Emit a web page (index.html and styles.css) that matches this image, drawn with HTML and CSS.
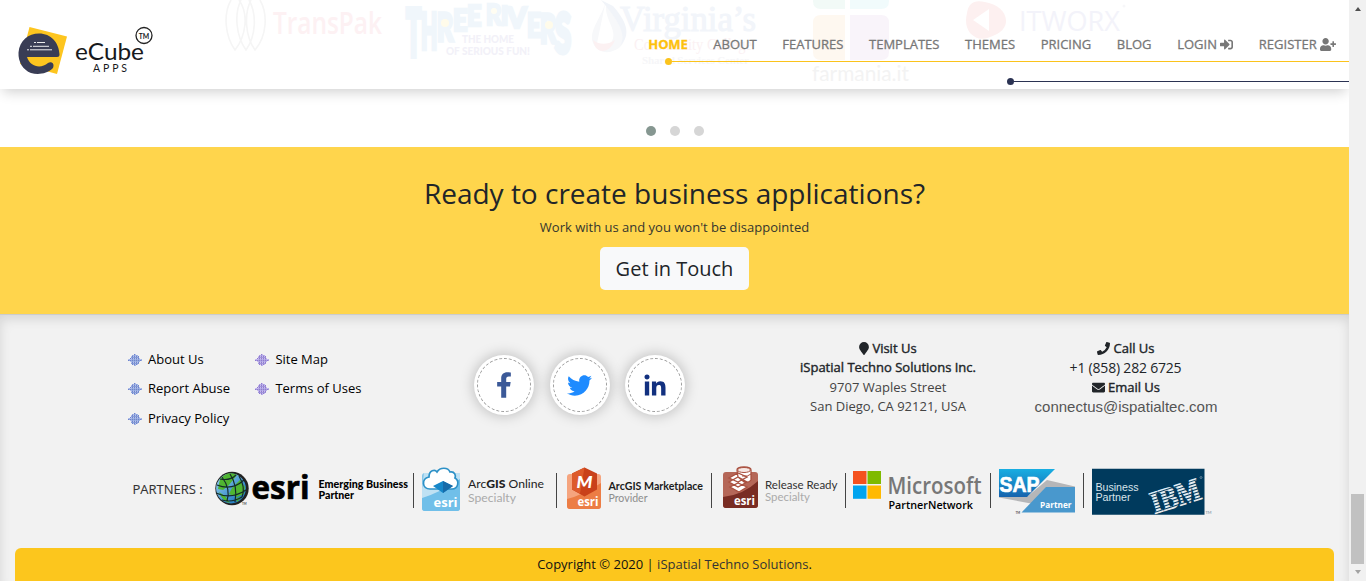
FILE: index.html
```
<!DOCTYPE html>
<html lang="en">
<head>
<meta charset="utf-8">
<title>eCube Apps</title>
<link rel="stylesheet" href="styles.css">
</head>
<body>
<svg width="0" height="0" class="defs">
  <defs>
    <pattern id="mesh" width="2" height="2" patternUnits="userSpaceOnUse"><rect width="2" height="2" fill="#b9c0ea"/><rect width="1" height="1" fill="#6b7fd4"/><rect x="1" y="1" width="1" height="1" fill="#9db8e8"/></pattern>
    <symbol id="bullet" viewBox="0 0 14 12"><path d="M6 0h2v1h2v1h1v2h1v1h2v2h-2v1h-1v2h-1v1H8v1H6v-1H4v-1H3V8H2V7H0V5h2V4h1V2h1V1h2z" fill="url(#mesh)"/><path d="M4.500 1v10M6.500 0v12M8.500 1v10M10.500 2v8M3 3.500h8M0 6.500h14M3 9.500h8" stroke="#6f8bcb" stroke-width=".5"/></symbol>
    <linearGradient id="globeSea" x1="0" y1="0" x2="1" y2="1"><stop offset="0" stop-color="#9bd4f2"/><stop offset="1" stop-color="#0867b5"/></linearGradient>
    <linearGradient id="sapBlue" x1="0" y1="0" x2="0" y2="1"><stop offset="0" stop-color="#18aee2"/><stop offset="1" stop-color="#1663ad"/></linearGradient>
  </defs>
</svg>
<div class="window">
  <div class="page">
    <header class="header">
      <svg class="clients" width="1349" height="89" viewBox="0 0 1349 89">
        <g fill="none" stroke="#f5f5f5" stroke-width="1.600"><path d="M231 0c-8 14-6 36 4 50 11-14 14-36 4-50M241 0c-7 14-5 36 5 50 10-14 11-36 3-50M251 0c-7 14-6 36 4 50 12-14 13-36 5-50"/></g>
        <text class="ghost-sans" x="273" y="34" font-size="30" font-weight="600" fill="#fdf1f3" textLength="109" lengthAdjust="spacingAndGlyphs">TransPak</text>
        <g class="arch" fill="#f0f6fb" stroke="#f0f6fb" stroke-width=".9" font-size="10" font-weight="900">
          <text transform="translate(406 56) scale(2.500 6.500)">T</text><text transform="translate(421 49) scale(2.100 4.900)">H</text><text transform="translate(437 41) scale(2.500 3.800)">R</text><text transform="translate(453 31) scale(2.500 3)">E</text><text transform="translate(467 26) scale(2.500 2.800)">E</text>
          <text transform="translate(486 25) scale(2.400 2.900)">R</text><text transform="translate(501 25) scale(2.400 2.700)">I</text><text transform="translate(507 28) scale(2.800 2.800)">V</text><text transform="translate(527 37) scale(2.400 3.300)">E</text><text transform="translate(540 43) scale(2.500 4)">R</text><text transform="translate(555 53) scale(2.900 5.600)">S</text>
        </g>
        <g fill="#f2f1f8" font-family="Lato, sans-serif" font-weight="900"><text x="462" y="43" font-size="11" textLength="52" lengthAdjust="spacingAndGlyphs">THE HOME</text><text x="446" y="55" font-size="11" textLength="84" lengthAdjust="spacingAndGlyphs">OF SERIOUS FUN!</text></g>
        <circle cx="445" cy="23" r="4" fill="#fffbea"/><circle cx="494" cy="11" r="3" fill="#fffdf2"/><circle cx="549" cy="25" r="4" fill="#fffbea"/>
        <path d="M606 0c-3 16-18 30-13 43 4 10 16 12 26 5 11-9 4-23-13-42-1 15 13 25 5 37-4 6-11 8-15 5" fill="#f7f8fa"/><path d="M601 0c15 18 27 34 19 46 12-12 6-25-7-40z" fill="#f1f4f9"/><path d="M593 40c5 4 13 6 22 0-4 12-19 17-22 0" fill="#fcf1f2"/>
        <g font-family="'Liberation Serif', serif" fill="#f2f5fa"><text x="620" y="31" font-size="36" font-weight="400" stroke="#f2f5fa" textLength="136" lengthAdjust="spacingAndGlyphs">Virginia’s</text><text x="634" y="50" font-size="17" fill="#fbf1f3" textLength="118" lengthAdjust="spacingAndGlyphs">Community College</text><text x="642" y="64" font-size="11" font-weight="700" fill="#f6f6f8" textLength="107">Shared Services Center</text></g>
        <path d="M813 0h32v9h-24q-8 0-8-8z" fill="#f2faf7"/><path d="M850 0h39v1q0 8-8 8h-31z" fill="#f1fbfc"/><path d="M821 15h24v45h-24q-8 0-8-8V23q0-8 8-8" fill="#fef8f0"/><path d="M850 15h31q8 0 8 8v29q0 8-8 8h-31z" fill="#f9f4fa"/>
        <text x="812" y="81" font-family="Lato, sans-serif" font-size="21" fill="#f3f3f3" textLength="97" lengthAdjust="spacingAndGlyphs">farmania.it</text>
        <path d="M967 13q2-15 18-11c22 4 28 23 12 32-12 6-19 7-27-1q-6-8-3-20m6 7 16 11V9z" fill="#fdf0f0" fill-rule="evenodd"/><text class="ghost-sans" x="1019" y="31" font-size="28" fill="#f3f3fa" textLength="101" lengthAdjust="spacingAndGlyphs">ITWORX</text><circle cx="1124" cy="6" r="1.500" fill="#f7f7f9"/>
      </svg>
      <a class="brand" href="#">
        <svg width="140" height="56" viewBox="15 24 140 56">
          <path d="M29.500 27 67 36.500 57 74 20 64z" fill="#fdc51f"/>
          <path d="M59.500 54.500q0 2.500-2.500 2.500H27c3 10 14 12 21 6 3-2 7 0 5 5-6 6-15 7-22 5-8-3-13-11-12.500-20.500 1-12 10-19 20.500-19 12 0 20 9 20.500 21" fill="#393d55"/>
          <path d="M34 42.500h2M37 42.500h8M30 46.300h2M33 46.300h16M27 49.800h2M30 49.800h22" stroke="#fff" stroke-width=".9"/>
          <circle cx="144" cy="35.500" r="8" fill="none" stroke="#222" stroke-width="1.300"/>
          <g font-family="Lato, sans-serif" fill="#17191c"><text x="75" y="60" font-size="23" textLength="69" lengthAdjust="spacingAndGlyphs">eCube</text><text x="138.700" y="38.500" font-size="7.500" font-weight="700" textLength="10.500" lengthAdjust="spacingAndGlyphs">TM</text><text x="93" y="72" font-size="10.500" textLength="34" lengthAdjust="spacing">APPS</text></g>
        </svg>
      </a>
      <div class="menu">
        <nav class="nav">
          <a class="active" href="#">HOME</a><a href="#">ABOUT</a><a href="#">FEATURES</a><a href="#">TEMPLATES</a><a href="#">THEMES</a><a href="#">PRICING</a><a href="#">BLOG</a>
          <a href="#">LOGIN <svg width="13" height="13" viewBox="0 0 512 512"><path fill="currentColor" d="M416 448h-84c-6.600 0-12-5.400-12-12v-40c0-6.600 5.400-12 12-12h84c17.700 0 32-14.300 32-32V160c0-17.700-14.300-32-32-32h-84c-6.600 0-12-5.400-12-12V76c0-6.600 5.400-12 12-12h84c53 0 96 43 96 96v192c0 53-43 96-96 96zm-47-209L201 71c-15-15-41-4.500-41 17v96H24c-13.300 0-24 10.700-24 24v96c0 13.300 10.700 24 24 24h136v96c0 21.500 26 32 41 17l168-168c9.300-9.400 9.300-24.600 0-34z"/></svg></a>
          <a href="#">REGISTER <svg width="16" height="13" viewBox="0 0 640 512"><path fill="currentColor" d="M624 208h-64v-64c0-8.800-7.200-16-16-16h-32c-8.800 0-16 7.200-16 16v64h-64c-8.800 0-16 7.200-16 16v32c0 8.800 7.200 16 16 16h64v64c0 8.800 7.200 16 16 16h32c8.800 0 16-7.200 16-16v-64h64c8.800 0 16-7.200 16-16v-32c0-8.800-7.200-16-16-16zm-400 48c70.700 0 128-57.300 128-128S294.700 0 224 0 96 57.300 96 128s57.300 128 128 128zm89.600 32h-16.700c-22.200 10.200-46.900 16-72.900 16s-50.600-5.800-72.900-16h-16.700C60.200 288 0 348.200 0 422.400V464c0 26.500 21.500 48 48 48h352c26.500 0 48-21.500 48-48v-41.600c0-74.200-60.200-134.400-134.400-134.400z"/></svg></a>
        </nav>
        <div class="rule gold"></div>
        <div class="rule navy"></div>
      </div>
    </header>
    <section class="carousel"><span class="dot on"></span><span class="dot"></span><span class="dot"></span></section>
    <section class="cta">
      <h2>Ready to create business applications?</h2>
      <p>Work with us and you won't be disappointed</p>
      <a class="button" href="#">Get in Touch</a>
    </section>
    <footer class="footer">
      <div class="info">
        <ul class="links">
          <li><svg width="14" height="12"><use href="#bullet"/></svg>About Us</li><li class="alt"><svg width="14" height="12"><use href="#bullet"/></svg>Site Map</li>
          <li><svg width="14" height="12"><use href="#bullet"/></svg>Report Abuse</li><li class="alt"><svg width="14" height="12"><use href="#bullet"/></svg>Terms of Uses</li>
          <li><svg width="14" height="12"><use href="#bullet"/></svg>Privacy Policy</li>
        </ul>
        <div class="social">
          <a href="#"><span><svg width="16" height="26" viewBox="0 0 320 512"><path fill="#3b5998" d="m279 288 14-93h-89v-60c0-25 12-50 52-50h41V7s-37-7-72-7c-73 0-121 44-121 125v70H23v93h81v224h100V288z"/></svg></span></a>
          <a href="#"><span><svg width="25" height="25" viewBox="0 0 512 512"><path fill="#1e8bff" d="M459.400 151.700c.3 4.500.3 9.100.3 13.600 0 138.700-105.600 298.600-298.600 298.600-59.500 0-114.700-17.200-161.100-47.100 8.400 1 16.600 1.300 25.300 1.300 49.100 0 94.200-16.600 130.300-44.800-46.100-1-84.800-31.200-98.100-72.800 6.500 1 13 1.600 19.800 1.600 9.400 0 18.800-1.300 27.600-3.600-48.100-9.700-84.100-52-84.100-103v-1.300c14 7.800 30.200 12.700 47.400 13.300-28.300-18.800-46.800-51-46.800-87.400 0-19.500 5.200-37.400 14.300-53 51.700 63.700 129.300 105.300 216.400 109.800-1.600-7.800-2.600-15.900-2.600-24 0-57.800 46.800-104.900 104.900-104.900 30.200 0 57.500 12.700 76.700 33.100 23.700-4.500 46.500-13.300 66.600-25.300-7.800 24.400-24.400 44.800-46.100 57.800 21.100-2.300 41.600-8.100 60.400-16.200-14.300 20.800-32.200 39.300-52.600 54.300z"/></svg></span></a>
          <a href="#"><span><svg width="24" height="24" viewBox="0 0 448 512"><path fill="#12307f" d="M100.300 480H7.400V180.900h92.900zM53.800 140.100C24.100 140.100 0 115.500 0 85.800a53.800 53.800 0 0 1 107.600 0c0 29.700-24.100 54.300-53.800 54.300zM448 480h-92.700V334.400c0-34.700-.7-79.200-48.300-79.200-48.300 0-55.700 37.700-55.700 76.700V480h-92.800V180.900h89.100v40.800h1.300c12.400-23.500 42.700-48.300 87.900-48.300 94 0 111.300 61.900 111.300 142.300V480z"/></svg></span></a>
        </div>
        <div class="contact visit">
          <div class="strong"><svg width="10" height="13" viewBox="0 0 384 512"><path fill="currentColor" d="M172 502C27 291 0 270 0 192a192 192 0 0 1 384 0c0 78-27 99-172 310-10 13-30 13-40 0"/></svg> Visit Us</div>
          <div class="strong">iSpatial Techno Solutions Inc.</div><div>9707 Waples Street</div><div>San Diego, CA 92121, USA</div>
        </div>
        <div class="contact call">
          <div class="strong"><svg width="13" height="13" viewBox="0 0 512 512"><path fill="currentColor" d="m493 25-104-24c-11-3-23 3-27 14l-48 112c-4 10-2 21 7 28l60 50a371 371 0 0 1-177 177l-50-60c-7-9-18-11-28-7L14 363c-11 4-17 16-14 27l24 104c3 11 12 18 24 18 256 0 464-207 464-464 0-11-8-21-19-23"/></svg> Call Us</div>
          <div class="phone">+1 (858) 282 6725</div>
          <div class="strong"><svg width="13" height="13" viewBox="0 0 512 512"><path fill="currentColor" d="M502 191c4-3 10 0 10 5v204c0 27-21 48-48 48H48c-27 0-48-21-48-48V196c0-5 6-8 10-5 22 17 52 39 154 114 21 15 57 47 92 47s72-32 92-47c102-75 132-97 154-114M256 320c23 0 56-29 73-42 133-96 143-104 174-128 6-5 9-12 9-19v-19c0-27-21-48-48-48H48c-27 0-48 21-48 48v19c0 7 3 14 9 19 31 24 41 32 174 128 17 13 50 42 73 42"/></svg> Email Us</div>
          <div class="email">connectus@ispatialtec.com</div>
        </div>
      </div>
      <div class="partners">
        <span class="label">PARTNERS :</span>
        <svg width="198" height="56" viewBox="215 462 198 56">
          <circle cx="232" cy="488.500" r="16.700" fill="#222"/><circle cx="231" cy="488.500" r="14.900" fill="url(#globeSea)"/>
          <path d="M220 479q8-9 17-4l-4 5-4 5-6 5-5-1zM240 480l5 7-1 7-7 3-8-3 3-6zM219 492l6 4 5 7q-8-2-11-11M236 498l6-1-5 5z" fill="#50b631"/>
          <path d="M222 477q9 12 5 24M230 474q8 12 5 28M239 476q7 12 3 21M217 485q15 6 27-5M216 493q15 7 30-3M222 500q10 3 20-3M220 479q10 2 16-4" fill="none" stroke="#142b28" stroke-width="1.200"/>
          <text x="251.500" y="498.500" class="humanist" font-size="33" font-weight="700" stroke="#000" stroke-width=".7" textLength="58" lengthAdjust="spacingAndGlyphs">esri</text>
          <g class="geo" font-weight="900" font-size="10.500"><text x="318.500" y="487.500" textLength="89.500" lengthAdjust="spacingAndGlyphs">Emerging Business</text><text x="318.500" y="498.500" textLength="35.500" lengthAdjust="spacingAndGlyphs">Partner</text></g>
          <text x="242" y="505" class="geo" font-size="3">TM</text>
        </svg>
        <i class="bar"></i>
        <svg width="142" height="56" viewBox="414 462 142 56">
          <rect x="422" y="473" width="38" height="38" rx="3" fill="#83c5e9"/><path d="M422 498q7-2 19-9 11-7 19-13v32q0 3-3 3h-32q-3 0-3-3z" fill="#70bfe9"/><path d="M422 489v9q17-5 38-19v-6H424z" fill="#bfe1f3"/>
          <path d="M430 489c-8 0-9-10-1-12 0-7 6-8 8-5 3-5 11-5 13 0 5-1 6 4 5 6 5 3 3 11-3 11z" fill="#fff" stroke="#2d91c7" stroke-width="1.700"/><path d="m433 486 10-5 10 5-10 7z" fill="#1687c9"/><path d="m443 481 10 5-10 7z" fill="#176ba9"/>
          <text x="433.500" y="507" class="humanist" font-size="13" font-weight="700" fill="#fff" textLength="24" lengthAdjust="spacingAndGlyphs">esri</text>
          <g class="geo" font-size="12" fill="#222"><text x="468" y="487.500" textLength="76" lengthAdjust="spacingAndGlyphs">Arc<tspan font-weight="900">GIS</tspan> Online</text><text x="468" y="501.500" fill="#aaa" font-size="11.500" textLength="48" lengthAdjust="spacingAndGlyphs">Specialty</text></g>
        </svg>
        <i class="bar"></i>
        <svg width="154" height="56" viewBox="557 462 154 56">
          <rect x="567" y="474" width="34" height="35" rx="3" fill="#f5a47e"/><path d="M567 499q16-4 34-16v23q0 3-3 3h-28q-3 0-3-3z" fill="#ec7d45"/><path d="m584.500 467.500 12.500 6v16l-12.500 7-12.500-7v-16z" fill="#c9411a"/><path d="m584.500 467.500-12.500 6v16l8 4z" fill="#dd5a2b"/>
          <text x="576.500" y="487.500" class="geo" font-size="16" font-weight="900" font-style="italic" fill="#fff" textLength="16" lengthAdjust="spacingAndGlyphs">M</text>
          <text x="577.500" y="506" class="humanist" font-size="12.500" font-weight="700" fill="#fff" textLength="21" lengthAdjust="spacingAndGlyphs">esri</text>
          <g class="geo"><text x="608.500" y="490" font-size="11.500" font-weight="700" fill="#1c1c1c" textLength="94.500" lengthAdjust="spacingAndGlyphs">ArcGIS Marketplace</text><text x="608.500" y="502" fill="#8d8d8d" font-size="10.500" textLength="39" lengthAdjust="spacingAndGlyphs">Provider</text></g>
        </svg>
        <i class="bar"></i>
        <svg width="133" height="56" viewBox="712 462 133 56">
          <rect x="723" y="472" width="35" height="36" rx="3" fill="#b56758"/><path d="M723 497q20-2 35-16v24q0 3-3 3h-29q-3 0-3-3z" fill="#792c23"/>
          <path d="m730 487 8-4 9 4-8 5zM729 482l9-5 9 5-9 5zM729 478l9-5 9 4-9 5zM737 470q0-3 7-3t7 3v10q-2 3-7 2l-6-5z" fill="#fff" stroke="#a9503f" stroke-width="1.300"/><ellipse cx="744" cy="470" rx="6.500" ry="2.500" fill="#f7e8e4" stroke="#a9503f"/><path d="M742 476q6 1 9-2" fill="none" stroke="#a9503f"/>
          <text x="734" y="504.500" class="humanist" font-size="12" font-weight="700" fill="#fff" textLength="21" lengthAdjust="spacingAndGlyphs">esri</text>
          <g class="geo" font-size="11.500" fill="#333"><text x="765" y="488.500" textLength="72.500" lengthAdjust="spacingAndGlyphs">Release Ready</text><text x="765" y="501" fill="#aaa" font-size="11" textLength="45" lengthAdjust="spacingAndGlyphs">Specialty</text></g>
        </svg>
        <i class="bar"></i>
        <svg width="144" height="56" viewBox="846 462 144 56">
          <path d="M853 471h13.500v13H853z" fill="#f4511e"/><path d="M867.500 471H881v13h-13.500z" fill="#7fba00"/><path d="M853 485.500h13.500v13.300H853z" fill="#00a4ef"/><path d="M867.500 485.500H881v13.300h-13.500z" fill="#ffb900"/>
          <g class="humanist"><text x="887.500" y="493.500" font-size="22.500" font-weight="600" fill="#777" textLength="94" lengthAdjust="spacingAndGlyphs">Microsoft</text><text x="888.500" y="508.500" font-size="11.500" font-weight="600" textLength="84.500" lengthAdjust="spacingAndGlyphs">PartnerNetwork</text></g>
        </svg>
        <i class="bar"></i>
        <svg width="92" height="56" viewBox="991 462 92 56">
          <path d="M999 496h29l19-16 28 6.500v3h-28l-22 21 6-7-32-6z" fill="#b5b6b8"/><path d="M999 469h56l-28 28h-28z" fill="url(#sapBlue)"/><path d="M1021.500 512.500 1046 487h29v25.500z" fill="#4998cd"/>
          <text x="999.500" y="491.500" font-family="'Liberation Sans', sans-serif" font-weight="700" font-size="22" fill="#fff" stroke="#fff" stroke-width=".7" textLength="40" lengthAdjust="spacingAndGlyphs">SAP</text><text x="1040" y="508" class="humanist" font-weight="700" font-size="9.500" fill="#fff" textLength="31.500" lengthAdjust="spacingAndGlyphs">Partner</text><text x="1015.500" y="513.500" class="geo" font-size="3">TM</text>
        </svg>
        <i class="bar"></i>
        <svg width="130" height="56" viewBox="1084 462 130 56">
          <path d="M1092 468.700h112.500v46H1092z" fill="#003a5d"/>
          <g font-family="'Liberation Sans', sans-serif" fill="#d8e4eb" font-size="11"><text x="1095.500" y="490.500" textLength="43" lengthAdjust="spacingAndGlyphs">Business</text><text x="1095.500" y="500.500" textLength="35" lengthAdjust="spacingAndGlyphs">Partner</text></g>
          <g transform="translate(1154.500 514) rotate(-18)"><text font-family="'Liberation Serif', serif" font-weight="700" font-size="32" fill="#e8eef2" stroke="#e8eef2" stroke-width="1" textLength="51" lengthAdjust="spacingAndGlyphs">IBM</text><path d="M-1-1.500h53M-1-4.500h53M-1-7.500h53M-1-10.500h53M-1-13.500h53M-1-16.500h53M-1-19.500h53" stroke="#003a5d" stroke-width="1"/></g>
          <circle cx="1201" cy="477.500" r="1" fill="none" stroke="#aebfca" stroke-width=".5"/>
          <text x="1205.500" y="514" class="geo" font-size="4" fill="#6d8899">TM</text>
        </svg>
      </div>
      <div class="copyright">Copyright © 2020 <b>|</b> <span>iSpatial Techno Solutions</span>.</div>
    </footer>
  </div>
  <aside class="scrollbar"><i class="up"></i><i class="thumb"></i><i class="down"></i></aside>
</div>
</body>
</html>
```
FILE: styles.css
```
* { box-sizing: border-box; }
body { margin: 0; overflow: hidden; background: #fff; font: 13px/19.5px "Open Sans", sans-serif; color: #212529; }
a { color: inherit; text-decoration: none; }
svg { display: block; flex: none; }
.defs { position: absolute; }
.window { display: flex; width: 1366px; height: 581px; overflow: hidden; }
.page { width: 1349px; display: flex; flex-direction: column; overflow: hidden; }

.header { position: relative; z-index: 1; height: 89px; flex: none; display: flex; justify-content: space-between; background: #fff; box-shadow: 0 6px 12px -3px rgba(0, 0, 0, .19); }
.clients { position: absolute; left: 0; top: 0; }
.ghost-sans { font-family: "Open Sans", sans-serif; }
.arch { font-family: Lato, sans-serif; }
.brand { position: relative; padding: 24px 0 0 15px; }
.menu { position: relative; display: flex; flex-direction: column; align-items: flex-end; padding-top: 35px; }
.nav { display: flex; gap: 25.600px; padding-right: 13px; height: 23px; color: #777; white-space: nowrap; }
.nav a { display: flex; align-items: center; gap: 3.300px; height: 19px; -webkit-text-stroke: .3px; letter-spacing: 0; }
.nav .active { color: #fdc10d; font-weight: 700; letter-spacing: -.1px; }
.rule { display: flex; align-items: center; height: 7px; }
.rule::before { content: ""; width: 7px; height: 7px; border-radius: 50%; background: currentColor; }
.rule::after { content: ""; flex: 1; height: 1px; background: currentColor; }
.gold { width: 684px; color: #fbc31c; }
.navy { width: 342px; margin-top: 13px; color: #2b3353; }

.carousel { height: 58px; flex: none; display: flex; justify-content: center; gap: 14px; padding-top: 37px; }
.dot { width: 10px; height: 10px; border-radius: 50%; background: #d6d6d6; }
.dot.on { background: #869791; }

.cta { height: 167px; flex: none; display: flex; flex-direction: column; align-items: center; background: #ffd54c; padding-top: 29px; }
.cta h2 { margin: 0; font-size: 28px; line-height: 34px; font-weight: 400; }
.cta p { margin: 8px 0 9px; color: #35352e; }
.button { height: 43px; width: 149px; border-radius: 5px; background: #f8f9fa; font-size: 20px; line-height: 43px; text-align: center; }

.footer { flex: 1; display: flex; flex-direction: column; background: #f2f2f2; border-top: 1px solid #ccc; box-shadow: inset 0 4px 12px rgba(0, 0, 0, .12); }
.info { height: 147px; display: flex; padding-left: 128px; }
.links { list-style: none; margin: 0; padding: 29.500px 0 0; width: 346px; display: grid; grid-template-columns: 127.400px 150px; grid-auto-rows: 29.500px; align-content: start; color: #000; }
.links li { display: flex; align-items: center; gap: 6px; height: 30px; white-space: nowrap; }
.alt svg { filter: hue-rotate(25deg); }
.social { width: 316px; display: flex; gap: 15.500px; padding-top: 40px; }
.social a { width: 60px; height: 60px; padding: 3px; border-radius: 50%; background: #fff; box-shadow: 0 0 14px rgba(0, 0, 0, .25); }
.social span { display: flex; width: 54px; height: 54px; align-items: center; justify-content: center; border: 1px dashed #999; border-radius: 50%; }
.contact { display: flex; flex-direction: column; align-items: center; padding-top: 24px; line-height: 19.400px; white-space: nowrap; }
.visit { width: 196px; color: #444; }
.call { width: 280px; }
.strong { display: flex; align-items: center; gap: 3px; color: #212529; -webkit-text-stroke: .4px; }
.phone { font-size: 14px; letter-spacing: -.2px; padding-right: 1px; }
.email { font: 15px/19.4px "Liberation Sans", sans-serif; color: #555; }
.partners { height: 56px; display: flex; align-items: center; padding-left: 132.500px; }
.label { width: 82.500px; white-space: nowrap; color: #333; -webkit-text-stroke: .1px; }
.bar { width: 1px; height: 35px; background: #444; flex: none; }
.geo { font-family: Lato, sans-serif; }
.humanist { font-family: "Open Sans", sans-serif; }
.copyright { margin: 30px 15px 0; height: 40px; flex: none; border-radius: 6px 6px 0 0; background: #fcc61d; text-align: center; line-height: 33px; color: #111; }
.copyright b { font-weight: 400; }
.copyright span { color: #333; }

.scrollbar { width: 17px; display: flex; flex-direction: column; align-items: center; background: #f1f1f1; }
.up { margin-top: 7px; border: 3.5px solid transparent; border-top: 0; border-bottom: 4px solid #505050; }
.thumb { width: 13px; height: 70px; margin-top: 483px; background: #c1c1c1; }
.down { margin-top: 6px; border: 3.5px solid transparent; border-bottom: 0; border-top: 4px solid #a3a3a3; }
```
